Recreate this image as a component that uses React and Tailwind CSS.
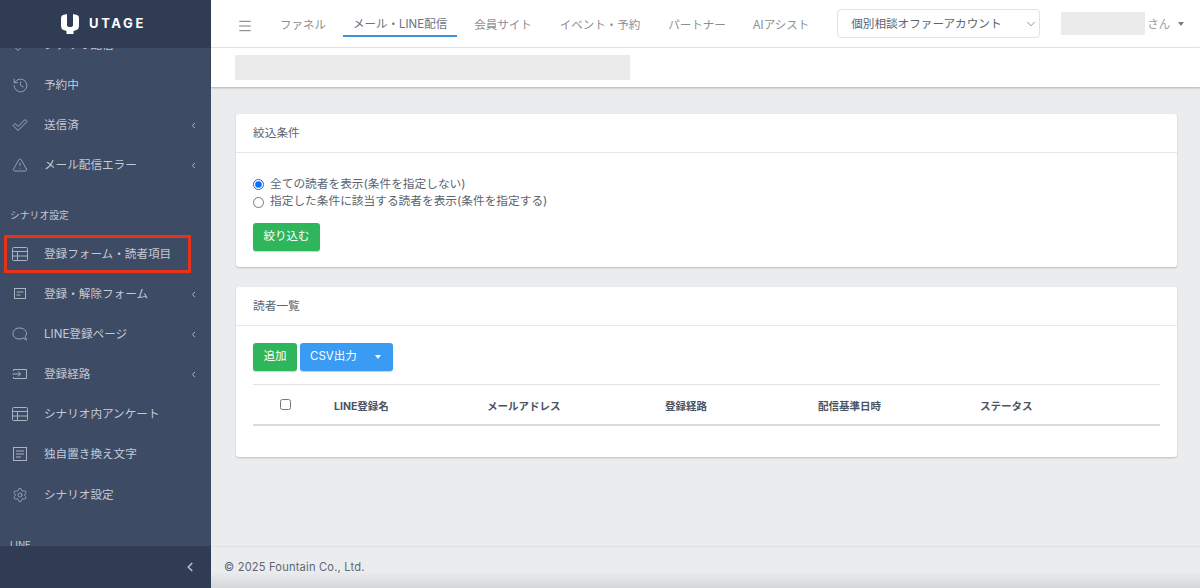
import React from "react";
import { History, TriangleAlert, Settings, ChevronLeft, ChevronDown, Menu } from "lucide-react";

function FormIcon() {
  return (
    <svg viewBox="0 0 16 14" width="16" height="14" fill="none" stroke="currentColor" strokeWidth="1">
      <rect x="2.500" y="1.500" width="11" height="10" />
      <path d="M4.500 5h7M4.500 8h4" />
    </svg>
  );
}
function EnterIcon() {
  return (
    <svg viewBox="0 0 16 14" width="16" height="14" fill="none" stroke="currentColor" strokeWidth="1">
      <path d="M1.500 4V2.500h13v9h-13V10M0.500 7h8M6 4.500L8.500 7 6 9.500" />
    </svg>
  );
}
function GridIcon() {
  return (
    <svg viewBox="0 0 16 14" width="16" height="14" fill="none" stroke="currentColor" strokeWidth="1">
      <rect x="0.500" y="0.500" width="15" height="13" rx="1" />
      <path d="M0.500 4.500h15M0.500 9h15M5.500 4.500v9" />
    </svg>
  );
}
function CheckIcon() {
  return (
    <svg viewBox="0 0 16 14" width="16" height="14" fill="none" stroke="currentColor" strokeWidth="0.900" strokeLinejoin="round">
      <path d="M1 7.500L3 5.500L6 8.500L13 1.500L15 3.500L6 12.500Z" />
    </svg>
  );
}
function BubbleIcon() {
  return (
    <svg viewBox="0 0 16 15" width="16" height="15" fill="none" stroke="currentColor" strokeWidth="0.900" strokeLinejoin="round">
      <path d="M7.500 1C3.500 1 1 3.500 1 6.500S3.500 12 7.500 12c1.500 0 3-.3 4-.9l3 1.900-1.300-3.500C14 8.500 14.500 7.500 14.500 6.500 14.500 3.500 11.500 1 7.500 1Z" />
    </svg>
  );
}
function DocIcon() {
  return (
    <svg viewBox="0 0 16 14" width="16" height="14" fill="none" stroke="currentColor" strokeWidth="1">
      <rect x="1.500" y="0.500" width="13" height="13" />
      <path d="M4 4h8M4 7h8M4 10h5" />
    </svg>
  );
}
function Row({ icon, label, chevron, children, extra }) {
  return (
    <div className={"relative flex h-10 shrink-0 items-center pl-[12px] pr-[13px] text-[11.600px] text-[#c3cad6] " + (extra || "")}>
      <span className="flex w-[32px] shrink-0 items-center text-[#aab3c2]">{icon}</span>
      <span className="mt-[2px] flex-1 whitespace-nowrap">{label}</span>
      {chevron && <ChevronLeft size={9} strokeWidth={2.500} className="text-[#b5bdcb]" />}
      {children}
    </div>
  );
}
function NavItem({ children, active }) {
  return (
    <div className={"flex items-center whitespace-nowrap px-[10px] text-[11.500px] " + (active ? "mb-[2px] h-[29px] border-b-2 border-[#3b8fdc] pt-[6px] text-[#6b7280]" : "mt-[4px] h-[30px] text-[#8a8f96]")}>
      {children}
    </div>
  );
}
function Card({ title, children }) {
  return (
    <section className="rounded-[3px] bg-white shadow-[0_1px_2px_rgba(0,0,0,0.2)]">
      <header className="flex h-[39px] items-center border-b border-[#e6e8eb] px-[17px] pt-[2px] text-[11.700px] text-[#5c6470]">{title}</header>
      {children}
    </section>
  );
}
function Radio({ checked, label }) {
  return (
    <label className="flex h-[17.500px] items-center gap-[6px] text-[11.700px] text-[#5c6470]">
      <input type="radio" name="filter" defaultChecked={checked} className="m-0 h-[11px] w-[11px] accent-[#0d6efd]" />
      {label}
    </label>
  );
}

export default function App() {
  return (
    <div className="flex h-[588px] w-[1200px] overflow-hidden bg-[#eaecee] font-['Inter','Noto_Sans_CJK_JP',sans-serif]">
      <aside className="flex w-[211px] shrink-0 flex-col bg-[#3d4b65]">
        <div className="relative z-10 flex h-12 shrink-0 items-center justify-center gap-[10px] bg-[#2f3c54] pr-[4px] text-white">
          <svg viewBox="0 0 18 20" width="18" height="20" fill="currentColor">
            <path d="M0 4 Q0 1.500 2 1 L6 0 V11 Q6 13 9 13 Q12 13 12 11 V0 L16 1 Q18 1.500 18 4 V12 Q18 15 15.500 16 L12.500 17 V20 H5.500 V17 L2.500 16 Q0 15 0 12 Z" />
          </svg>
          <span className="text-[13px] font-bold tracking-[2.600px]">UTAGE</span>
        </div>
        <div className="min-h-0 flex-1 overflow-hidden">
          <div className="-mt-[23px] flex flex-col">
            <Row icon={<CheckIcon />} label="シナリオ配信" />
            <Row icon={<History size={17} strokeWidth={1.100} />} label="予約中" />
            <Row icon={<CheckIcon />} label="送信済" chevron />
            <Row icon={<TriangleAlert size={16} strokeWidth={1.200} />} label="メール配信エラー" chevron />
            <div className="flex h-[49px] items-end pb-[10px] pl-[10px] text-[9.800px] text-[#c3cad6]">シナリオ設定</div>
            <Row icon={<GridIcon />} label="登録フォーム・読者項目">
              <span className="absolute left-[4px] top-[1px] h-[38px] w-[187px] border-[3px] border-[#e8321a]"></span>
            </Row>
            <Row icon={<FormIcon />} label="登録・解除フォーム" chevron />
            <Row icon={<BubbleIcon />} label="LINE登録ページ" chevron />
            <Row icon={<EnterIcon />} label="登録経路" chevron />
            <Row icon={<GridIcon />} label="シナリオ内アンケート" />
            <Row icon={<DocIcon />} label="独自置き換え文字" />
            <Row icon={<Settings size={16} strokeWidth={1.200} />} label="シナリオ設定" extra="mt-[1px]" />
            <div className="pl-[10px] pt-[23px] text-[9.500px] text-[#c3cad6]">LINE</div>
          </div>
        </div>
        <div className="flex h-[42px] shrink-0 items-center justify-end bg-[#2f3c54] pr-[14px]">
          <ChevronLeft size={14} strokeWidth={3} className="text-[#b5bdcb]" />
        </div>
      </aside>

      <div className="flex min-w-0 flex-1 flex-col">
        <nav className="flex h-[48px] shrink-0 items-center border-b border-[#e3e5e8] bg-white pl-[26px]">
          <Menu size={16} strokeWidth={1.500} className="mr-[17px] mt-[5px] text-[#777c84]" />
          <NavItem>ファネル</NavItem>
          <span className="w-[7px]"></span>
          <NavItem active>メール・LINE配信</NavItem>
          <span className="w-[7px]"></span>
          <NavItem>会員サイト</NavItem>
          <span className="w-[8px]"></span>
          <NavItem>イベント・予約</NavItem>
          <span className="w-[8px]"></span>
          <NavItem>パートナー</NavItem>
          <span className="w-[7px]"></span>
          <NavItem>AIアシスト</NavItem>
          <div className="ml-[18px] flex h-[29px] w-[203px] shrink-0 items-center justify-between rounded-[4px] border border-[#dfe2e6] pl-[13px] pr-[1px] text-[11.600px] text-[#5c6470]">
            <span className="pt-[2px]">個別相談オファーアカウント</span>
            <ChevronDown size={14} strokeWidth={1.200} />
          </div>
          <div className="ml-[21px] h-[23px] w-[84px] shrink-0 bg-[#ebebeb]"></div>
          <span className="ml-[2px] shrink-0 whitespace-nowrap pt-[2px] text-[11.500px] text-[#9a9ea5]">さん</span>
          <span className="ml-[8px] h-0 w-0 shrink-0 border-x-[3.500px] border-t-[4px] border-x-transparent border-t-[#777c84]"></span>
        </nav>
        <div className="z-[1] flex h-[39px] shrink-0 items-center bg-white pl-[24px] shadow-[0_1px_2px_rgba(0,0,0,0.25)]">
          <div className="h-[25px] w-[395px] bg-[#ebebeb]"></div>
        </div>

        <main className="flex min-h-0 flex-1 flex-col gap-[20px] pl-[25px] pr-[23px] pt-[27px]">
          <Card title="絞込条件">
            <div className="px-[17px] pb-[16px] pt-[23px]">
              <Radio checked label="全ての読者を表示(条件を指定しない)" />
              <Radio label="指定した条件に該当する読者を表示(条件を指定する)" />
              <button className="mt-[12px] block h-[28px] w-[67px] rounded-[3px] bg-[#2fb65d] text-[11.500px] text-white shadow-[0_1px_1px_rgba(0,0,0,0.2)]">絞り込む</button>
            </div>
          </Card>
          <Card title="読者一覧">
            <div className="px-[17px] pb-[31px] pt-[17px]">
              <div className="flex gap-[3px]">
                <button className="h-[28px] w-[44px] rounded-[3px] bg-[#2fb65d] text-[11.500px] text-white shadow-[0_1px_1px_rgba(0,0,0,0.2)]">追加</button>
                <div className="flex h-[28px] w-[93px] items-center rounded-[3px] bg-[#3a9bf4] text-[11.500px] text-white shadow-[0_1px_1px_rgba(0,0,0,0.2)]">
                  <span className="w-[66px] pl-[10px]">CSV出力</span>
                  <span className="ml-[9px] h-0 w-0 border-x-[3.500px] border-t-[4px] border-x-transparent border-t-white"></span>
                </div>
              </div>
              <div className="mt-[13px] flex h-[42px] items-center border-y border-y-[#dfe2e6] border-b-2 border-b-[#d8dbdf] pt-[5px] text-[10.500px] font-bold text-[#4a5364]">
                <span className="flex w-[81px] -translate-y-[3px] justify-center pr-[17px]">
                  <input type="checkbox" className="m-0 h-[11px] w-[11px]" />
                </span>
                <span className="w-[153px]">LINE登録名</span>
                <span className="w-[178px]">メールアドレス</span>
                <span className="w-[153px]">登録経路</span>
                <span className="w-[162px]">配信基準日時</span>
                <span>ステータス</span>
              </div>
            </div>
          </Card>
        </main>

        <footer className="flex h-[42px] shrink-0 items-center border-t border-[#dfe1e4] bg-gradient-to-b from-[#eaecee] from-60% to-[#d5d7da] pl-[13px] text-[11.100px] tracking-[0.2px] text-[#5f6570]">
          © 2025 Fountain Co., Ltd.
        </footer>
      </div>
    </div>
  );
}
